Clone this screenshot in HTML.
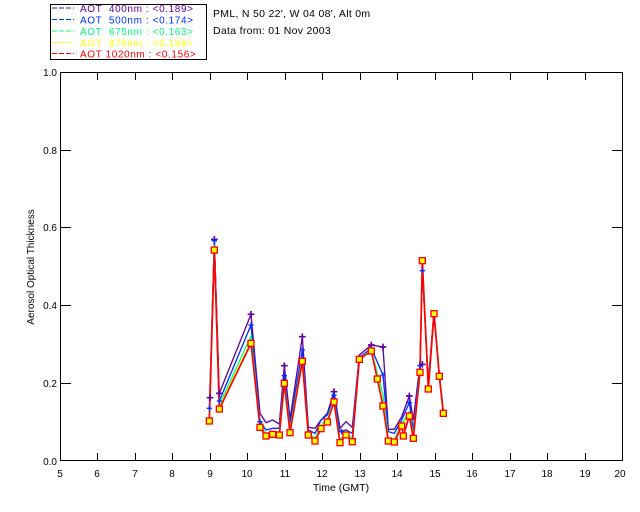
<!DOCTYPE html>
<html><head><meta charset="utf-8"><style>
html,body{margin:0;padding:0;background:#fff;}
svg{display:block;font-family:"Liberation Sans",sans-serif;}
</style></head><body>
<svg width="640" height="512" viewBox="0 0 640 512" xmlns="http://www.w3.org/2000/svg">
<rect width="640" height="512" fill="#fff"/>
<!-- legend -->
<rect x="50.5" y="4.5" width="156" height="55" fill="none" stroke="#000" stroke-width="1"/>
<g font-size="10" letter-spacing="0.6">
<line x1="52" y1="8" x2="74" y2="8" stroke="#6000a0" stroke-dasharray="5,2"/>
<text x="80" y="12" fill="#6000a0" xml:space="preserve">AOT  400nm : &lt;0.189&gt;</text>
<line x1="52" y1="19.5" x2="74" y2="19.5" stroke="#0030ff" stroke-dasharray="5,2"/>
<text x="80" y="23.5" fill="#0030ff" xml:space="preserve">AOT  500nm : &lt;0.174&gt;</text>
<line x1="52" y1="31" x2="74" y2="31" stroke="#00ff80" stroke-dasharray="5,2"/>
<text x="80" y="35" fill="#00ff80" xml:space="preserve">AOT  675nm : &lt;0.163&gt;</text>
<line x1="52" y1="42.5" x2="74" y2="42.5" stroke="#ffff00" stroke-dasharray="5,2"/>
<text x="80" y="46.5" fill="#ffff00" xml:space="preserve">AOT  870nm : &lt;0.158&gt;</text>
<line x1="52" y1="53.5" x2="74" y2="53.5" stroke="#ff0000" stroke-dasharray="5,2"/>
<text x="80" y="57.5" fill="#ff0000" xml:space="preserve">AOT 1020nm : &lt;0.156&gt;</text>
</g>
<text x="213" y="17" font-size="10.5" letter-spacing="0.3">PML, N 50 22', W 04 08', Alt 0m</text>
<text x="213" y="34" font-size="10.5" letter-spacing="0.3">Data from: 01 Nov 2003</text>
<!-- axes -->
<g stroke="#000" stroke-width="1" fill="none">
<rect x="60.5" y="72.5" width="562" height="388"/>
<path d="M97.5 461v-8M135.5 461v-8M172.5 461v-8M210.5 461v-8M247.5 461v-8M285.5 461v-8M322.5 461v-8M360.5 461v-8M397.5 461v-8M435.5 461v-8M472.5 461v-8M510.5 461v-8M547.5 461v-8M585.5 461v-8"/>
<path d="M97.5 72v8M135.5 72v8M172.5 72v8M210.5 72v8M247.5 72v8M285.5 72v8M322.5 72v8M360.5 72v8M397.5 72v8M435.5 72v8M472.5 72v8M510.5 72v8M547.5 72v8M585.5 72v8"/>
<path d="M60 383.5h11M60 305.5h11M60 227.5h11M60 150.5h11M623 383.5h-11M623 305.5h-11M623 227.5h-11M623 150.5h-11"/>
</g>
<g font-size="10" text-anchor="end">
<text x="57" y="465">0.0</text><text x="57" y="387">0.2</text><text x="57" y="309">0.4</text><text x="57" y="231">0.6</text><text x="57" y="154">0.8</text><text x="57" y="76">1.0</text>
</g>
<g font-size="10" text-anchor="middle">
<text x="60" y="477">5</text><text x="97" y="477">6</text><text x="135" y="477">7</text><text x="172" y="477">8</text><text x="210" y="477">9</text><text x="247" y="477">10</text><text x="285" y="477">11</text><text x="322" y="477">12</text><text x="360" y="477">13</text><text x="397" y="477">14</text><text x="435" y="477">15</text><text x="472" y="477">16</text><text x="510" y="477">17</text><text x="547" y="477">18</text><text x="585" y="477">19</text><text x="620" y="477">20</text>
<text x="341" y="491" font-size="10.5">Time (GMT)</text>
</g>
<text transform="translate(34,267) rotate(-90)" font-size="10" text-anchor="middle">Aerosol Optical Thickness</text>
<!-- data, zoom coords -->
<g transform="translate(180,220) scale(0.33333)" fill="none" stroke-width="4">
<polyline stroke="#6000a0" points="90,533 103,58 118,520 213,283 240,580 258,608 278,600 298,612 313,437 330,598 367,350 385,622 405,625 423,600 442,580 462,515 480,625 498,605 517,622 538,405 574,375 609,381 625,628 643,628 665,590 688,528 700,600 720,433 727,145 745,487 762,272 778,465 790,575"/>
<polyline stroke="#0030ff" points="88,565 103,62 118,543 213,315 240,605 258,630 278,625 298,625 313,467 330,615 367,390 385,630 405,640 423,600 442,585 462,525 480,635 498,630 517,640 538,412 574,385 609,465 625,635 643,640 665,600 688,548 700,630 720,437 727,152 745,490 762,278 778,465 790,575"/>
<polyline stroke="#00ff80" points="88,590 103,75 118,555 213,348 240,615 258,640 278,635 298,638 313,480 330,628 367,415 385,640 405,655 423,615 442,598 462,540 480,658 498,640 517,655 538,415 574,390 609,525 625,655 643,658 665,612 688,575 700,645 720,450 727,135 745,500 762,280 778,468 790,578"/>
<polyline stroke="#ffff00" points="88,598 103,85 118,562 213,365 240,620 258,645 278,640 298,642 313,487 330,635 367,420 385,643 405,660 423,622 442,603 462,544 480,665 498,643 517,662 538,417 574,392 609,550 625,660 643,663 665,616 688,585 700,652 720,455 727,128 745,505 762,281 778,469 790,580"/>
<polyline stroke="#ff0000" stroke-width="5" points="88,603 103,90 118,567 213,370 240,622 258,648 278,643 298,645 313,490 330,638 367,424 385,645 405,663 423,626 442,606 462,546 480,668 498,645 517,665 538,418 574,393 592,477 609,558 625,663 643,666 665,618 670,648 688,588 700,655 720,457 727,122 745,507 762,281 778,469 790,580"/>
<g stroke="#6000a0" stroke-width="5">
<path d="M80 533h20M90 523v20M93 58h20M103 48v20M108 520h20M118 510v20M203 283h20M213 273v20M303 437h20M313 427v20M357 350h20M367 340v20M452 515h20M462 505v20M564 375h20M574 365v20M599 381h20M609 371v20M678 528h20M688 518v20M717 433h20M727 423v20"/>
</g>
<g stroke="#0030ff" stroke-width="4">
<path d="M80 565h16M88 557v16M95 62h16M103 54v16M110 543h16M118 535v16M205 315h16M213 307v16M305 467h16M313 459v16M359 390h16M367 382v16M454 525h16M462 517v16M601 465h16M609 457v16M680 548h16M688 540v16M712 437h16M720 429v16M719 152h16M727 144v16M232 605h16M240 597v16M477 635h16M485 627v16"/>
</g>
<g stroke="#ff0000" stroke-width="4" fill="#ffff00">
<rect x="79" y="594" width="18" height="18"/><rect x="94" y="81" width="18" height="18"/><rect x="109" y="558" width="18" height="18"/><rect x="204" y="361" width="18" height="18"/><rect x="231" y="613" width="18" height="18"/><rect x="249" y="639" width="18" height="18"/><rect x="269" y="634" width="18" height="18"/><rect x="289" y="636" width="18" height="18"/><rect x="304" y="481" width="18" height="18"/><rect x="321" y="629" width="18" height="18"/><rect x="358" y="415" width="18" height="18"/><rect x="376" y="636" width="18" height="18"/><rect x="396" y="654" width="18" height="18"/><rect x="414" y="617" width="18" height="18"/><rect x="433" y="597" width="18" height="18"/><rect x="453" y="537" width="18" height="18"/><rect x="471" y="659" width="18" height="18"/><rect x="489" y="636" width="18" height="18"/><rect x="508" y="656" width="18" height="18"/><rect x="529" y="409" width="18" height="18"/><rect x="565" y="384" width="18" height="18"/><rect x="583" y="468" width="18" height="18"/><rect x="600" y="549" width="18" height="18"/><rect x="616" y="654" width="18" height="18"/><rect x="634" y="657" width="18" height="18"/><rect x="656" y="609" width="18" height="18"/><rect x="661" y="639" width="18" height="18"/><rect x="679" y="579" width="18" height="18"/><rect x="691" y="646" width="18" height="18"/><rect x="711" y="448" width="18" height="18"/><rect x="718" y="113" width="18" height="18"/><rect x="736" y="498" width="18" height="18"/><rect x="753" y="272" width="18" height="18"/><rect x="769" y="460" width="18" height="18"/><rect x="781" y="571" width="18" height="18"/>
</g>
</g>
</svg>
</body></html>
